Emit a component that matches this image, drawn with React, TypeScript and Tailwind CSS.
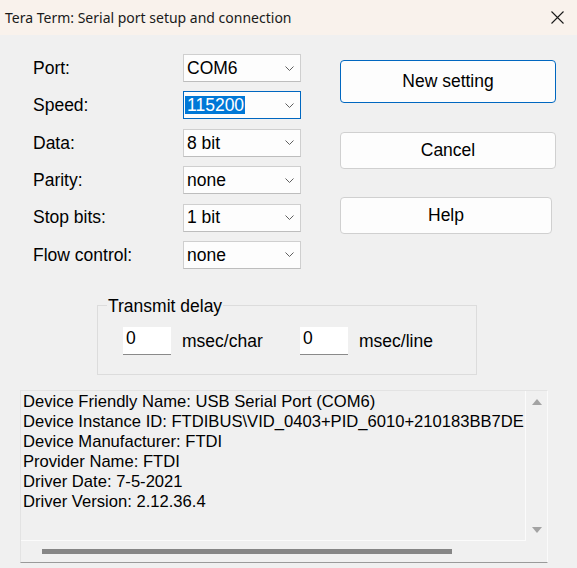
import React from "react";

const fields = [
  { label: "Port:", value: "COM6" },
  { label: "Speed:", value: "115200", focused: true },
  { label: "Data:", value: "8 bit" },
  { label: "Parity:", value: "none" },
  { label: "Stop bits:", value: "1 bit" },
  { label: "Flow control:", value: "none" },
];

const info = [
  "Device Friendly Name: USB Serial Port (COM6)",
  "Device Instance ID: FTDIBUS\\VID_0403+PID_6010+210183BB7DE",
  "Device Manufacturer: FTDI",
  "Provider Name: FTDI",
  "Driver Date: 7-5-2021",
  "Driver Version: 2.12.36.4",
];

const Chevron = () => (
  <svg width="9" height="5" viewBox="0 0 9 5" className="shrink-0">
    <polyline points="0.5,0.5 4.5,4.5 8.5,0.5" fill="none" stroke="#5f5f5f" strokeWidth="1" />
  </svg>
);

const Select = ({ value, focused }: { value: string; focused?: boolean }) => (
  <div
    className={
      focused
        ? "flex items-center justify-between w-[118px] h-[28px] bg-[#fdfdfd] border border-[#0067c0] pl-[1px] pr-[6px]"
        : "flex items-center justify-between w-[118px] h-[28px] bg-[#fdfdfd] border border-[#cfcfcf] border-b-[#bdbdbd] pl-[3px] pr-[6px]"
    }
  >
    {focused ? (
      <span className="bg-[#0078d7] text-white leading-[18px] pl-[2px] pr-[1px]">{value}</span>
    ) : (
      <span>{value}</span>
    )}
    <Chevron />
  </div>
);

const Button = ({ label, primary, className }: { label: string; primary?: boolean; className: string }) => (
  <button
    className={
      (primary ? "border-[#0067c0] " : "border-[#d0d0d0] ") +
      "bg-[#fdfdfd] border rounded-[4px] flex items-center justify-center " +
      className
    }
  >
    {label}
  </button>
);

export default function App() {
  return (
    <div
      className="w-[577px] h-[568px] bg-[#f0f0f0] text-black text-[17.5px] flex flex-col overflow-hidden"
      style={{ fontFamily: '"Liberation Sans", Arial, sans-serif' }}
    >
      {/* title bar */}
      <div className="h-[35px] bg-[#f9f2ec] flex items-center justify-between pl-[5px] pr-[13px] shrink-0">
        <span className="text-[14px] text-[#1a1a1a]" style={{ fontFamily: '"Noto Sans", sans-serif' }}>
          Tera Term: Serial port setup and connection
        </span>
        <svg width="13" height="13" viewBox="0 0 13 13">
          <path d="M0.5 0.5 L12.5 12.5 M12.5 0.5 L0.5 12.5" stroke="#1a1a1a" strokeWidth="1.1" />
        </svg>
      </div>

      {/* settings + buttons */}
      <div className="flex pt-[19px] pl-[33px]">
        <div className="flex flex-col gap-[9.4px]">
          {fields.map((f) => (
            <div key={f.label} className="flex items-center h-[28px]">
              <span className="w-[150px]">{f.label}</span>
              <Select value={f.value} focused={f.focused} />
            </div>
          ))}
        </div>
        <div className="flex flex-col ml-[39px] pt-[6px]">
          <Button label="New setting" primary className="w-[216px] h-[43px]" />
          <Button label="Cancel" className="w-[216px] h-[37px] mt-[29px]" />
          <Button label="Help" className="w-[212px] h-[37px] mt-[28px]" />
        </div>
      </div>

      {/* transmit delay */}
      <fieldset className="ml-[97px] mt-[27px] w-[380px] h-[79px] border border-[#dcdcdc]">
        <legend className="ml-[9px] px-[1px] leading-[20px]">Transmit delay</legend>
        <div className="flex items-center mt-[11px] ml-[25px]">
          <div className="w-[48px] h-[28px] bg-white border-b border-[#8a8a8a] pl-[3px] leading-[22px]">0</div>
          <span className="ml-[11px] w-[118px]">msec/char</span>
          <div className="w-[48px] h-[28px] bg-white border-b border-[#8a8a8a] pl-[3px] leading-[22px]">0</div>
          <span className="ml-[11px]">msec/line</span>
        </div>
      </fieldset>

      {/* device info */}
      <div className="ml-[20px] mt-[15px] w-[528px] h-[173px] border-t border-l border-[#e3e3e3] border-r border-r-[#fafafa] border-b border-b-[#9a9a9a] grid grid-cols-[1fr_21px] grid-rows-[1fr_21px]">
        <div className="border-r border-b border-[#fbfbfb] overflow-hidden pl-[2px] pt-[1px] text-[16.6px] leading-[20px] whitespace-nowrap">
          {info.map((line) => (
            <div key={line}>{line}</div>
          ))}
        </div>
        <div className="flex flex-col items-center justify-between py-[8px] pl-[1px]">
          <svg width="10" height="6" viewBox="0 0 10 6">
            <polygon points="5,0 10,6 0,6" fill="#a3a3a3" />
          </svg>
          <svg width="10" height="6" viewBox="0 0 10 6">
            <polygon points="0,0 10,0 5,6" fill="#a3a3a3" />
          </svg>
        </div>
        <div className="flex items-center pl-[21px]">
          <div className="w-[410px] h-[5px] bg-[#868686]" />
        </div>
        <div />
      </div>
    </div>
  );
}
